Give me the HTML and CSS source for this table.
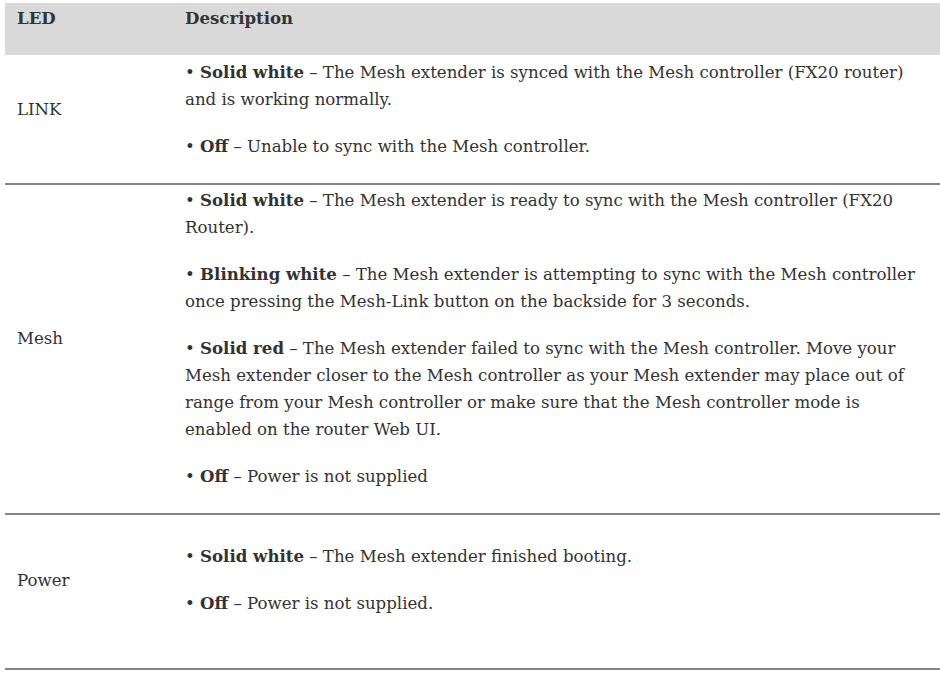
FILE: index.html
```html
<!DOCTYPE html>
<html>
<head>
<meta charset="utf-8">
<link rel="stylesheet" href="styles.css">
</head>
<body>
<div class="table">
  <div class="head">
    <div class="label">LED</div>
    <div class="desc">Description</div>
  </div>
  <div class="row row-link">
    <div class="label">LINK</div>
    <div class="desc">
      <p>• <b>Solid white</b> – The Mesh extender is synced with the Mesh controller (FX20 router)<br>and is working normally.</p>
      <p>• <b>Off</b> – Unable to sync with the Mesh controller.</p>
    </div>
  </div>
  <div class="row row-mesh">
    <div class="label">Mesh</div>
    <div class="desc">
      <p>• <b>Solid white</b> – The Mesh extender is ready to sync with the Mesh controller (FX20<br>Router).</p>
      <p>• <b>Blinking white</b> – The Mesh extender is attempting to sync with the Mesh controller<br>once pressing the Mesh-Link button on the backside for 3 seconds.</p>
      <p>• <b>Solid red</b> – The Mesh extender failed to sync with the Mesh controller. Move your<br>Mesh extender closer to the Mesh controller as your Mesh extender may place out of<br>range from your Mesh controller or make sure that the Mesh controller mode is<br>enabled on the router Web UI.</p>
      <p>• <b>Off</b> – Power is not supplied</p>
    </div>
  </div>
  <div class="row row-power">
    <div class="label">Power</div>
    <div class="desc">
      <p>• <b>Solid white</b> – The Mesh extender finished booting.</p>
      <p>• <b>Off</b> – Power is not supplied.</p>
    </div>
  </div>
</div>
</body>
</html>
```

FILE: styles.css
```css
html, body {
  margin: 0;
  padding: 0;
  background: #ffffff;
}
body {
  font-family: "DejaVu Serif", "Liberation Serif", serif;
  font-size: 16.6px;
  line-height: 27px;
  color: #323232;
}
.table {
  margin: 3px 0 0 5px;
  width: 935px;
}
.head {
  display: grid;
  grid-template-columns: 180px 1fr;
  background: #d9d9d9;
  height: 52px;
  box-sizing: border-box;
  padding-top: 2px;
  font-weight: bold;
  color: #333333;
}
.label {
  padding-left: 12px;
}
.row {
  display: grid;
  grid-template-columns: 180px 1fr;
  align-items: center;
  border-bottom: 2px solid #858585;
  box-sizing: border-box;
}
.desc p {
  margin: 0 0 20px 0;
  white-space: nowrap;
}
.desc p:last-child {
  margin-bottom: 0;
}
.row-link {
  padding-top: 4px;
  height: 130px;
  padding-bottom: 23px;
}
.row-mesh {
  padding-top: 1px;
  height: 330px;
  padding-bottom: 23px;
}
.row-power {
  padding-top: 28px;
  height: 155px;
  padding-bottom: 51px;
}
b {
  font-weight: bold;
}
```
